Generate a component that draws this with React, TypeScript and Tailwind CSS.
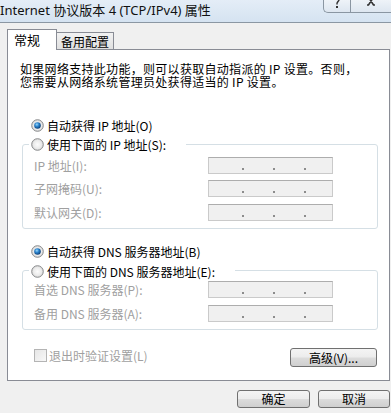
import React from 'react';

function Radio({ checked }: { checked?: boolean }) {
  return (
    <svg width="13" height="13" viewBox="0 0 13 13" className="shrink-0">
      <defs>
        <radialGradient id="rfill" cx="50%" cy="50%" r="50%">
          <stop offset="0%" stopColor="#fcfcfc" />
          <stop offset="70%" stopColor="#eaeaea" />
          <stop offset="100%" stopColor="#d2d2d2" />
        </radialGradient>
        <radialGradient id="rdot" cx="40%" cy="35%" r="65%">
          <stop offset="0%" stopColor="#9ad8fa" />
          <stop offset="45%" stopColor="#2e86cf" />
          <stop offset="100%" stopColor="#0c3f78" />
        </radialGradient>
      </defs>
      <circle cx="6.5" cy="6.5" r="5.8" fill="url(#rfill)" stroke="#8a8c8e" strokeWidth="1" />
      {checked && <circle cx="6.5" cy="6.5" r="3.3" fill="url(#rdot)" />}
    </svg>
  );
}

function AddrRow({ label }: { label: string }) {
  return (
    <div className="flex items-center h-[17px]">
      <span className="w-[174px] text-[#a0a0a0] whitespace-nowrap">{label}</span>
      <div className="w-[125px] h-[17px] border border-[#cacaca] border-t-[#adadad] bg-[#f0f0f0] flex items-end pb-[3px] pl-[33px] gap-[29px]">
        <span className="w-[2px] h-[2px] bg-[#8c8c8c]" />
        <span className="w-[2px] h-[2px] bg-[#8c8c8c]" />
        <span className="w-[2px] h-[2px] bg-[#8c8c8c]" />
      </div>
    </div>
  );
}

function WinButton({ children, className }: { children: React.ReactNode; className: string }) {
  return (
    <button
      className={
        'rounded-[3px] border border-[#707070] bg-[linear-gradient(180deg,#f4f4f4_0%,#ececec_48%,#dcdcdc_52%,#cfcfcf_100%)] text-[12px] leading-none text-black flex items-center justify-center ' +
        className
      }
    >
      {children}
    </button>
  );
}

export default function App() {
  return (
    <div className="w-[391px] h-[413px] overflow-hidden bg-[#f0f0f0] font-['Noto_Sans_CJK_SC','Noto_Sans',sans-serif] text-[12px] leading-[13px] text-black">
      {/* Title bar */}
      <div className="h-[23px] flex justify-between border-b border-[#8b97a3] bg-[linear-gradient(180deg,#e4edf7_0%,#d5e3f1_100%)]">
        <span className="text-[13px] leading-[20px] whitespace-nowrap font-['Noto_Sans','Noto_Sans_CJK_SC',sans-serif] text-[#111]">
          Internet 协议版本 4 (TCP/IPv4) 属性
        </span>
        <div className="flex h-[13px] border-l border-b border-[#8a96a2] rounded-bl-[5px] overflow-hidden bg-[linear-gradient(180deg,#eef3f8,#dde6f0)]">
          <div className="w-[27px] h-full border-r border-[#8a96a2] flex items-start justify-center">
            <svg width="8" height="10" viewBox="0 0 8 10">
              <path d="M6.2 -1 C6.2 1.2 4 1.8 4 3.6 L4 4.6" stroke="#333" strokeWidth="1.4" fill="none" />
              <rect x="3" y="6" width="2" height="2" fill="#333" />
            </svg>
          </div>
          <div className="w-[40px] h-full flex items-start justify-center">
            <svg width="12" height="8" viewBox="0 0 12 8">
              <path d="M4 -2 L8.5 5 L10 5 M8 -2 L3.5 5 L2 5" stroke="#333" strokeWidth="1.6" fill="none" />
            </svg>
          </div>
        </div>
      </div>

      {/* Tabs */}
      <div className="pt-[6px] pl-[7px] flex items-end">
        <div className="relative z-10 -mb-[1px] w-[50px] h-[21px] bg-white border border-b-0 border-[#898c95] pl-[6px] pt-[3px] text-[13px] leading-[14px]">
          常规
        </div>
        <div className="w-[57px] h-[17px] border-t border-r border-[#898c95] bg-[linear-gradient(180deg,#f2f2f2,#e0e0e0)] pl-[4px] pt-[2px] text-[12px] leading-[14px]">
          备用配置
        </div>
      </div>

      {/* Panel */}
      <div className="ml-[7px] w-[383px] h-[332px] border border-[#898c95] bg-white pt-[12px] px-[12px] flex flex-col">
        <p className="whitespace-nowrap tracking-[0.3px]">
          如果网络支持此功能，则可以获取自动指派的 IP 设置。否则，
          <br />
          您需要从网络系统管理员处获得适当的 IP 设置。
        </p>

        <div className="mt-[29px] ml-[11px] h-[16px] flex items-center gap-[3px]">
          <Radio checked />
          <span>自动获得 IP 地址(O)</span>
        </div>

        <div className="relative z-10 mt-[3px] ml-[9px] self-start h-[16px] flex items-center gap-[3px] bg-white pl-[2px] pr-[20px]">
          <Radio />
          <span>使用下面的 IP 地址(S):</span>
        </div>
        <div className="-mt-[8px] ml-[2px] w-[356px] border border-[#d5dfe5] rounded-[3px] pl-[11px] pt-[12px] pb-[7px] flex flex-col gap-[6px]">
          <AddrRow label="IP 地址(I):" />
          <AddrRow label="子网掩码(U):" />
          <div className="mt-[1px]">
            <AddrRow label="默认网关(D):" />
          </div>
        </div>

        <div className="mt-[14px] ml-[11px] h-[16px] flex items-center gap-[3px]">
          <Radio checked />
          <span>自动获得 DNS 服务器地址(B)</span>
        </div>

        <div className="relative z-10 mt-[4px] ml-[9px] self-start h-[16px] flex items-center gap-[3px] bg-white pl-[2px] pr-[20px]">
          <Radio />
          <span>使用下面的 DNS 服务器地址(E):</span>
        </div>
        <div className="-mt-[9px] ml-[2px] w-[356px] border border-[#d5dfe5] rounded-[3px] pl-[11px] pt-[10px] pb-[7px] flex flex-col gap-[7px]">
          <AddrRow label="首选 DNS 服务器(P):" />
          <AddrRow label="备用 DNS 服务器(A):" />
        </div>

        <div className="mt-[18px] flex justify-between items-start">
          <div className="ml-[14px] mt-[1px] flex items-center gap-[2px] text-[#a0a0a0]">
            <span className="w-[13px] h-[13px] border border-[#b4b4b4] bg-[linear-gradient(135deg,#e6e6e6,#f8f8f8)]" />
            <span>退出时验证设置(L)</span>
          </div>
          <WinButton className="w-[87px] h-[19px]">高级(V)...</WinButton>
        </div>
      </div>

      {/* Dialog buttons */}
      <div className="mt-[9px] flex justify-end gap-[8px] pr-[1px]">
        <WinButton className="w-[73px] h-[18px]">确定</WinButton>
        <WinButton className="w-[72px] h-[18px]">取消</WinButton>
      </div>
    </div>
  );
}
